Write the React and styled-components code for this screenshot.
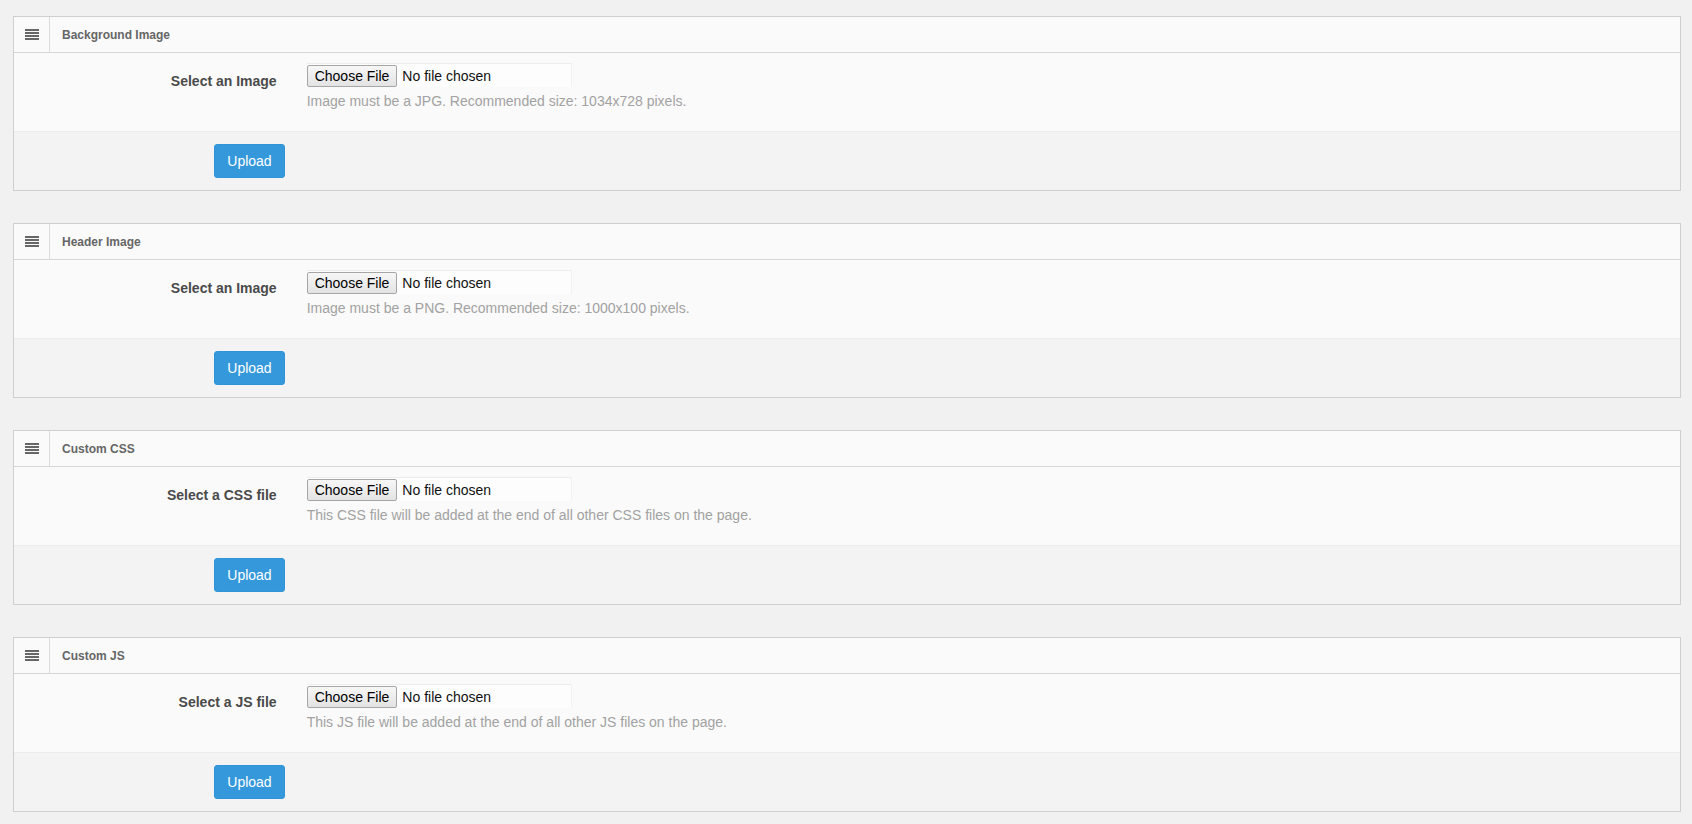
import React from "react";
import styled, { createGlobalStyle } from "styled-components";

const GlobalStyle = createGlobalStyle`
  html, body { margin: 0; padding: 0; background: #f1f1f1; }
  body { font-family: "Liberation Sans", Arial, sans-serif; font-size: 14px; line-height: 20px; color: #333; }
  * { box-sizing: border-box; }
`;

const Page = styled.div`
  padding: 16px 11px 12px 13px;
  display: flex;
  flex-direction: column;
  gap: 32px;
`;

const Panel = styled.section`
  border: 1px solid #cfcfcf;
  background: #fafafa;
`;

const Header = styled.header`
  display: flex;
  align-items: stretch;
  height: 36px;
  border-bottom: 1px solid #d6d6d6;
  background: #fafafa;
`;

const IconCell = styled.div`
  width: 36px;
  display: flex;
  align-items: center;
  justify-content: center;
  border-right: 1px solid #dcdcdc;
  padding-left: 1px;
`;

const Title = styled.h3`
  margin: 0;
  display: flex;
  align-items: center;
  padding-left: 12px;
  font-size: 12px;
  font-weight: bold;
  color: #666;
`;

const Body = styled.div`
  display: grid;
  grid-template-columns: 16.6667% 1fr;
  padding: 10px 0 20px;
  border-bottom: 1px solid #ececec;
  background: #fafafa;
`;

const Label = styled.label`
  text-align: right;
  padding: 8px 15px 0 15px;
  font-weight: bold;
  color: #4a4a4a;
`;

const Control = styled.div`
  padding-left: 15px;
`;

const FileInput = styled.div`
  width: 265px;
  height: 24px;
  display: flex;
  align-items: center;
  background: #fdfdfd;
  border-top: 1px solid #ededed;
  border-right: 1px solid #f2f2f2;
`;

const ChooseButton = styled.button`
  height: 22px;
  padding: 0 7px;
  margin: 0;
  border: 1px solid #a6a6a6;
  border-radius: 2px;
  background: linear-gradient(#f7f7f7, #e3e3e3);
  font-family: "Liberation Sans", Arial, sans-serif;
  font-size: 14px;
  line-height: 20px;
  color: #000;
`;

const FileName = styled.span`
  padding-left: 5px;
  color: #111;
`;

const Help = styled.p`
  margin: 4px 0 0;
  color: #a2a2a2;
`;

const Footer = styled.div`
  display: grid;
  grid-template-columns: 16.6667% 1fr;
  padding: 12px 0 12px;
  background: #f3f3f3;
`;

const UploadButton = styled.button`
  justify-self: end;
  margin-right: 7px;
  height: 34px;
  padding: 6px 12px;
  border: 1px solid #3294d8;
  border-radius: 3px;
  background: #3498db;
  color: #fff;
  font-family: "Liberation Sans", Arial, sans-serif;
  font-size: 14px;
  line-height: 20px;
`;

const MenuIcon = () => (
  <svg width="14" height="11" viewBox="0 0 14 11" aria-hidden="true">
    {[0, 3, 6, 9].map((y) => (
      <rect key={y} x="0" y={y} width="14" height="2" fill="#666" />
    ))}
  </svg>
);

const sections = [
  { title: "Background Image", label: "Select an Image", help: "Image must be a JPG. Recommended size: 1034x728 pixels." },
  { title: "Header Image", label: "Select an Image", help: "Image must be a PNG. Recommended size: 1000x100 pixels." },
  { title: "Custom CSS", label: "Select a CSS file", help: "This CSS file will be added at the end of all other CSS files on the page." },
  { title: "Custom JS", label: "Select a JS file", help: "This JS file will be added at the end of all other JS files on the page." },
];

export default function App() {
  return (
    <>
      <GlobalStyle />
      <Page>
        {sections.map((s) => (
          <Panel key={s.title}>
            <Header>
              <IconCell>
                <MenuIcon />
              </IconCell>
              <Title>{s.title}</Title>
            </Header>
            <Body>
              <Label>{s.label}</Label>
              <Control>
                <FileInput>
                  <ChooseButton type="button">Choose File</ChooseButton>
                  <FileName>No file chosen</FileName>
                </FileInput>
                <Help>{s.help}</Help>
              </Control>
            </Body>
            <Footer>
              <UploadButton type="button">Upload</UploadButton>
            </Footer>
          </Panel>
        ))}
      </Page>
    </>
  );
}
